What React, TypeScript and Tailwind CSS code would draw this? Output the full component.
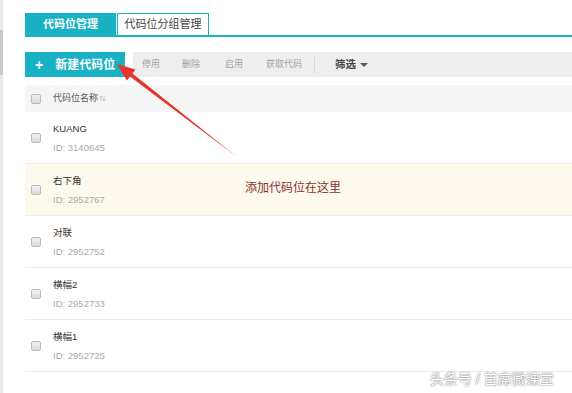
import { ArrowUpDown } from "lucide-react";

type Slot = { name: string; id: string; highlight?: boolean };

const slots: Slot[] = [
  { name: "KUANG", id: "3140645" },
  { name: "右下角", id: "2952767", highlight: true },
  { name: "对联", id: "2952752" },
  { name: "横幅2", id: "2952733" },
  { name: "横幅1", id: "2952725" },
];

const font = "font-['Liberation_Sans','Noto_Sans_CJK_SC',sans-serif]";

function Check() {
  return (
    <span className="ml-[6px] mr-[12px] inline-block h-[10px] w-[10px] shrink-0 rounded-[2px] border border-[#b9b9b9] bg-gradient-to-b from-[#f4f4f4] to-[#d9d9d9]" />
  );
}

export default function App() {
  return (
    <div className={`relative flex h-[393px] w-[572px] overflow-hidden bg-white ${font}`}>
      <div className="flex w-[3px] shrink-0 flex-col bg-[#e8e8e8]">
        <div className="h-[30px]" />
        <div className="h-[45px] bg-[#c9c9c9]" />
      </div>

      <div className="flex min-w-0 flex-1 flex-col pl-[22px] pt-[14px]">
        <div className="flex h-[23px] items-end gap-[1px] border-b-2 border-[#19b1c4]">
          <div className="flex h-[22px] w-[91px] items-center justify-center bg-[#19b1c4] text-[11px] font-bold text-white">
            代码位管理
          </div>
          <div className="flex h-[22px] w-[92px] items-center justify-center border border-b-0 border-[#19b1c4] text-[11px] text-[#444]">
            代码位分组管理
          </div>
        </div>

        <div className="mt-[15px] flex h-[25px] gap-[8px]">
          <button className="flex w-[100px] items-center bg-[#19b1c4] pl-[10px] text-[12px] font-bold text-white">
            <span className="mr-[12px] text-[14px] leading-none">+</span>
            新建代码位
          </button>
          <div className="flex flex-1 items-center bg-[#eeeeee] pl-[9px] text-[9px] text-[#a3a3a3]">
            <span>停用</span>
            <span className="ml-[22px]">删除</span>
            <span className="ml-[25px]">启用</span>
            <span className="ml-[23px]">获取代码</span>
            <span className="ml-[12px] h-[16px] w-px bg-[#dadada]" />
            <span className="ml-[20px] text-[10.5px] font-bold text-[#444]">筛选</span>
            <span className="ml-[4px] mt-[1px] h-0 w-0 border-x-[4px] border-t-[4px] border-x-transparent border-t-[#555]" />
          </div>
        </div>

        <div className="mt-[8px] flex h-[27px] items-center bg-[#f5f5f5] text-[9px] text-[#555]">
          <Check />
          <span>代码位名称</span>
          <ArrowUpDown className="ml-[1px] h-[7px] w-[7px] text-[#aaa]" strokeWidth={2} />
        </div>

        {slots.map((s) => (
          <div
            key={s.id}
            className={`flex h-[52px] items-center border-b border-[#ededed] ${
              s.highlight ? "bg-[#fdf9ec]" : "bg-white"
            }`}
          >
            <Check />
            <div className="flex flex-col gap-[7px] pt-[1px] leading-[12px]">
              <span className="text-[9.5px] text-[#333]">{s.name}</span>
              <span className="text-[9.5px] text-[#aaa]">ID: {s.id}</span>
            </div>
          </div>
        ))}
      </div>

      <span className="pointer-events-none absolute left-[245px] top-[179px] text-[12px] text-[#8b2f2f]">
        添加代码位在这里
      </span>

      <svg className="pointer-events-none absolute left-0 top-0" width="572" height="393">
        <polygon
          points="117,64 135.5,69.5 132.4,73.4 237,157 130,76.6 126.9,80.5"
          fill="#e8332c"
        />
      </svg>

      <div className="pointer-events-none absolute left-[430px] top-[369px] text-[14px] text-white [text-shadow:0_0_2px_#777,0_0_1px_#999]">
        头条号 / 首席微课堂
      </div>
    </div>
  );
}
